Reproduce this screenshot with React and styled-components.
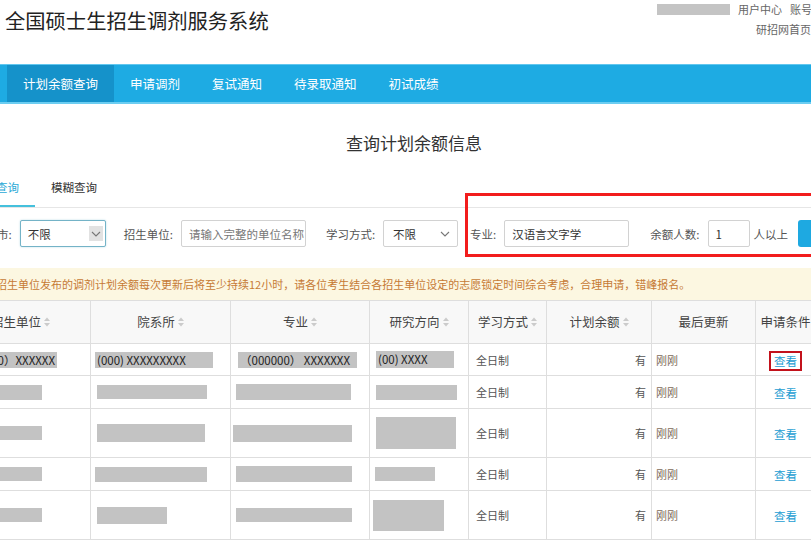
import React from 'react';
import styled, { createGlobalStyle } from 'styled-components';

const GlobalStyle = createGlobalStyle`
  html, body { margin: 0; padding: 0; overflow: hidden; background: #fff; }
  body {
    width: 811px; height: 541px;
    font-family: "Noto Sans CJK SC", "Noto Sans", "Liberation Sans", sans-serif;
    color: #333;
  }
  * { box-sizing: border-box; }
  #root { width: 811px; height: 541px; overflow: hidden; }
`;

const Header = styled.header`
  height: 64px;
  display: flex;
  justify-content: space-between;
  align-items: flex-start;
`;

const SiteTitle = styled.h1`
  margin: 7px 0 0 5px;
  font-size: 20.3px;
  font-weight: 400;
  line-height: 26px;
  color: #222;
  white-space: nowrap;
`;

const TopLinks = styled.div`
  display: flex;
  flex-direction: column;
  align-items: flex-end;
  gap: 6px;
  padding-top: 2px;
  margin-right: -23px;
  font-size: 11px;
  line-height: 14px;
  color: #666;
  white-space: nowrap;
`;

const TopRow = styled.div`
  display: flex;
  align-items: center;
  gap: 8px;
  padding-right: ${p => p.$pr || 0}px;
`;

const Blur = styled.span`
  display: inline-block;
  width: 73px;
  height: 11px;
  background: #c4c4c4;
`;

const NavBar = styled.nav`
  height: 40px;
  background: #1eabe3;
  border-top: 1px solid #62c7ef;
  border-bottom: 2px solid #6ccdf1;
  display: flex;
  padding-left: 7px;
`;

const NavItem = styled.a`
  display: flex;
  align-items: center;
  padding: 0 16px;
  font-size: 12.5px;
  color: #fff;
  background: ${p => (p.$active ? '#1592ca' : 'transparent')};
  white-space: nowrap;
`;

const Main = styled.main`
  width: 928px;
  margin-left: -50px;
`;

const PageTitle = styled.h2`
  margin: 0;
  padding-top: 27px;
  text-align: center;
  font-size: 17px;
  font-weight: 400;
  line-height: 24px;
  color: #333;
`;

const TabBar = styled.div`
  margin-top: 14px;
  display: flex;
  padding-left: 7px;
  border-bottom: 1px solid #e6e6e6;
`;

const Tab = styled.a`
  height: 38px;
  padding: 0 16px;
  display: flex;
  align-items: center;
  font-size: 11.5px;
  color: ${p => (p.$active ? '#2aa9d6' : '#333')};
  border-bottom: 2px solid ${p => (p.$active ? '#45c0dc' : 'transparent')};
  white-space: nowrap;
`;

const FormRow = styled.div`
  position: relative;
  margin-top: 12px;
  height: 27px;
  display: flex;
  align-items: center;
  padding-left: 35.5px;
  white-space: nowrap;
`;

const Field = styled.div`
  display: flex;
  align-items: center;
  margin-right: ${p => p.$mr || 0}px;
`;

const Label = styled.label`
  font-size: 11.5px;
  color: #555;
  margin-right: ${p => (p.$mr !== undefined ? p.$mr : 8)}px;
`;

const SelectBox = styled.div`
  width: ${p => p.$w}px;
  height: 27px;
  display: flex;
  align-items: center;
  justify-content: space-between;
  padding: 0 ${p => (p.$focus ? 2 : 7)}px 0 ${p => (p.$focus ? 7 : 9)}px;
  border: 1px solid ${p => (p.$focus ? '#74b3c7' : '#d2d2d2')};
  border-radius: 2px;
  box-shadow: ${p => (p.$focus ? '0 0 2px rgba(90,170,200,0.45)' : 'none')};
  font-size: 11.5px;
  color: #333;
  background: #fff;
`;

const ArrowBox = styled.span`
  display: flex;
  align-items: center;
  justify-content: center;
  width: 14px;
  height: 15px;
  background: ${p => (p.$filled ? '#e2e2e2' : 'transparent')};
`;

const TextInput = styled.div`
  width: ${p => p.$w}px;
  height: 27px;
  display: flex;
  align-items: center;
  padding-left: 7px;
  border: 1px solid #d2d2d2;
  border-radius: 2px;
  font-size: 11.5px;
  color: ${p => (p.$placeholder ? '#777' : '#333')};
  background: #fff;
`;

const Unit = styled.span`
  font-size: 11.5px;
  color: #555;
  margin-right: 10px;
`;

const SearchButton = styled.button`
  width: 60px;
  height: 27px;
  border: none;
  border-radius: 3px;
  background: #1ea9e1;
  color: #fff;
  font-family: inherit;
  font-size: 12px;
`;

const Annotation = styled.div`
  position: absolute;
  left: 515px;
  top: -27px;
  width: 420px;
  height: 64px;
  border: 3px solid #f21d1d;
  pointer-events: none;
`;

const Notice = styled.div`
  margin-top: 21px;
  height: 32px;
  line-height: 32px;
  padding-left: 46px;
  background: #fcf7e1;
  color: #c67a35;
  font-size: 11px;
  white-space: nowrap;
`;

const Table = styled.table`
  width: 928px;
  border-collapse: collapse;
  table-layout: fixed;
`;

const Th = styled.th`
  height: 43px;
  padding: 0 4px;
  line-height: 16px;
  font-size: 12.5px;
  font-weight: 400;
  color: #444;
  background: #f8f8f8;
  border: 1px solid #dedede;
  text-align: center;
  white-space: nowrap;
`;

const Tr = styled.tr`
  height: ${p => p.$h}px;
`;

const Td = styled.td`
  padding: 0;
  padding-left: ${p => (p.$pl !== undefined ? p.$pl : 0)}px;
  padding-right: ${p => (p.$pr !== undefined ? p.$pr : 6)}px;
  line-height: 16px;
  font-size: 11px;
  color: ${p => p.$color || '#555'};
  border: 1px solid #dedede;
  text-align: ${p => p.$align || 'left'};
  vertical-align: middle;
  white-space: nowrap;
  overflow: hidden;
`;

const Redact = styled.span`
  display: block;
  margin-left: ${p => p.$x}px;
  width: ${p => p.$w}px;
  height: ${p => p.$h}px;
  line-height: ${p => p.$h}px;
  background: #c3c3c3;
  font-size: 11.5px;
  color: #222;
  padding: 0 2px;
  text-align: ${p => p.$align || 'left'};
  overflow: hidden;
  white-space: nowrap;
`;

const ViewLink = styled.a`
  display: inline-block;
  vertical-align: middle;
  padding: 1px 3px;
  line-height: 14px;
  font-size: 11.5px;
  color: #1c9dd2;
  outline: ${p => (p.$marked ? '2px solid #c3121c' : 'none')};
`;

const SortWrap = styled.span`
  display: inline-flex;
  align-items: center;
  gap: 3px;
`;

const SortIcon = () => (
  <svg width="6" height="10" viewBox="0 0 6 10">
    <path d="M0 4 L3 0.5 L6 4 Z" fill="#cbcbcb" />
    <path d="M0 6 L3 9.5 L6 6 Z" fill="#cbcbcb" />
  </svg>
);

const Chevron = () => (
  <svg width="10" height="6" viewBox="0 0 10 6">
    <path d="M1 1 L5 5 L9 1" fill="none" stroke="#777" strokeWidth="1.1" />
  </svg>
);

const navItems = ['计划余额查询', '申请调剂', '复试通知', '待录取通知', '初试成绩'];

const columns = [
  { title: '招生单位', sort: true, w: 140 },
  { title: '院系所', sort: true, w: 140 },
  { title: '专业', sort: true, w: 139 },
  { title: '研究方向', sort: true, w: 99 },
  { title: '学习方式', sort: true, w: 78 },
  { title: '计划余额', sort: true, w: 105 },
  { title: '最后更新', sort: false, w: 104 },
  { title: '申请条件', sort: false, w: 60 },
  { title: '操作', sort: false, w: 63 },
];

const rows = [
  {
    h: 32,
    marked: true,
    cells: [
      { x: 5, w: 101, h: 16, text: '（00000）XXXXXX', align: 'right' },
      { x: 4, w: 118, h: 16, text: '(000) XXXXXXXXX' },
      { x: 7, w: 119, h: 16, text: '（000000） XXXXXXX' },
      { x: 6, w: 78, h: 17, text: '(00) XXXX' },
    ],
  },
  {
    h: 33,
    cells: [
      { x: 10, w: 81, h: 15 },
      { x: 6, w: 110, h: 14 },
      { x: 5, w: 115, h: 16 },
      { x: 6, w: 81, h: 15 },
    ],
  },
  {
    h: 49,
    cells: [
      { x: 10, w: 81, h: 14 },
      { x: 6, w: 108, h: 18 },
      { x: 2, w: 119, h: 17 },
      { x: 6, w: 80, h: 32 },
    ],
  },
  {
    h: 33,
    cells: [
      { x: 10, w: 81, h: 14 },
      { x: 4, w: 112, h: 15 },
      { x: 5, w: 116, h: 16 },
      { x: 5, w: 60, h: 14 },
    ],
  },
  {
    h: 49,
    cells: [
      { x: 10, w: 81, h: 14 },
      { x: 6, w: 70, h: 17 },
      { x: 5, w: 116, h: 14 },
      { x: 3, w: 71, h: 31 },
    ],
  },
];

export default function App() {
  return (
    <>
      <GlobalStyle />
      <Header>
        <SiteTitle>全国硕士生招生调剂服务系统</SiteTitle>
        <TopLinks>
          <TopRow>
            <Blur />
            <span>用户中心</span>
            <span>账号管理</span>
          </TopRow>
          <TopRow $pr={23}>
            <span>研招网首页</span>
          </TopRow>
        </TopLinks>
      </Header>
      <NavBar>
        {navItems.map((n, i) => (
          <NavItem key={n} $active={i === 0}>{n}</NavItem>
        ))}
      </NavBar>
      <Main>
        <PageTitle>查询计划余额信息</PageTitle>
        <TabBar>
          <Tab $active>精确查询</Tab>
          <Tab>模糊查询</Tab>
        </TabBar>
        <FormRow>
          <Field $mr={18}>
            <Label>省市:</Label>
            <SelectBox $w={86} $focus>
              <span>不限</span>
              <ArrowBox $filled><Chevron /></ArrowBox>
            </SelectBox>
          </Field>
          <Field $mr={20}>
            <Label>招生单位:</Label>
            <TextInput $w={125} $placeholder>请输入完整的单位名称</TextInput>
          </Field>
          <Field $mr={12}>
            <Label>学习方式:</Label>
            <SelectBox $w={75}>
              <span>不限</span>
              <Chevron />
            </SelectBox>
          </Field>
          <Field $mr={21}>
            <Label>专业:</Label>
            <TextInput $w={125}>汉语言文字学</TextInput>
          </Field>
          <Field $mr={4}>
            <Label>余额人数:</Label>
            <TextInput $w={42}>1</TextInput>
          </Field>
          <Unit>人以上</Unit>
          <SearchButton>查询</SearchButton>
          <Annotation />
        </FormRow>
        <Notice>
          招生单位发布的调剂计划余额每次更新后将至少持续12小时，请各位考生结合各招生单位设定的志愿锁定时间综合考虑，合理申请，错峰报名。
        </Notice>
        <Table>
          <colgroup>
            {columns.map(c => (
              <col key={c.title} style={{ width: c.w }} />
            ))}
          </colgroup>
          <thead>
            <tr>
              {columns.map(c => (
                <Th key={c.title}>
                  <SortWrap>
                    {c.title}
                    {c.sort && <SortIcon />}
                  </SortWrap>
                </Th>
              ))}
            </tr>
          </thead>
          <tbody>
            {rows.map((r, i) => (
              <Tr key={i} $h={r.h}>
                {r.cells.map((c, j) => (
                  <Td key={j}>
                    <Redact $x={c.x} $w={c.w} $h={c.h} $align={c.align}>
                      {c.text || ''}
                    </Redact>
                  </Td>
                ))}
                <Td $pl={7}>全日制</Td>
                <Td $align="right" $pr={5}>有</Td>
                <Td $pl={4} $color="#7d6a58">刚刚</Td>
                <Td $align="center" $pl={0} $pr={0}>
                  <ViewLink $marked={r.marked}>查看</ViewLink>
                </Td>
                <Td />
              </Tr>
            ))}
          </tbody>
        </Table>
      </Main>
    </>
  );
}
